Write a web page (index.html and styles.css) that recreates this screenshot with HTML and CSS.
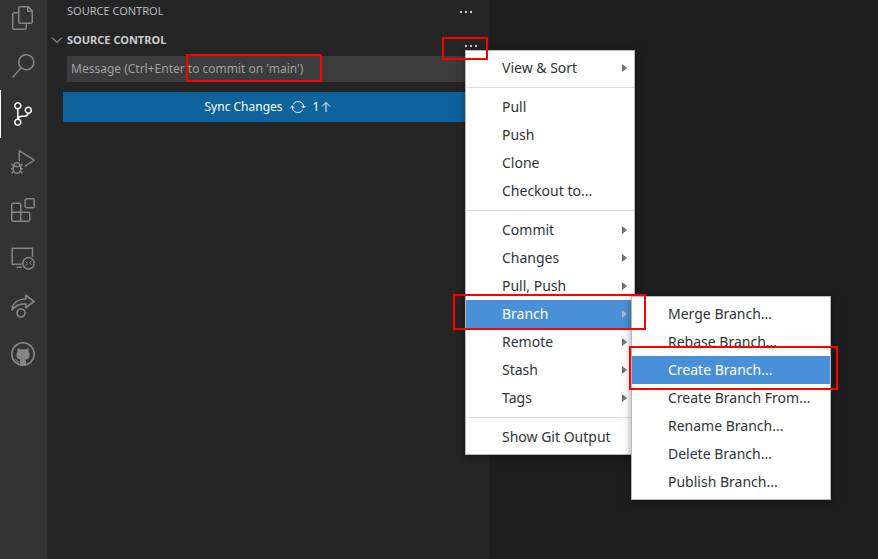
FILE: index.html
```html
<!DOCTYPE html>
<html lang="en">
<head>
<meta charset="utf-8">
<meta name="viewport" content="width=device-width, initial-scale=1">
<title>Source Control</title>
<link rel="stylesheet" href="styles.css">
</head>
<body>
<div class="workbench">
  <nav class="activity-bar" aria-label="Views">
    <button class="activity" aria-label="Explorer"><svg viewBox="0 0 24 24"><path d="M17.5 0h-9L7 1.5V6H2.5L1 7.5v15.07L2.5 24h12.07L16 22.57V18h4.7l1.3-1.43V4.5L17.5 0zm0 2.12l2.38 2.38H17.5V2.12zm-3 20.38h-12v-15H7v9.07L8.5 18h6v4.5zm6-6h-12v-15H16V6h4.5v10.5z"/></svg></button>
    <button class="activity" aria-label="Search"><svg viewBox="0 0 24 24"><path d="M15.25 0a8.25 8.25 0 0 0-6.18 13.72L1 22.88l1.12 1 8.05-9.12A8.251 8.251 0 1 0 15.25.01V0zm0 15a6.75 6.75 0 1 1 0-13.5 6.75 6.75 0 0 1 0 13.5z"/></svg></button>
    <button class="activity activity-current" aria-label="Source Control"><svg viewBox="0 0 24 24"><path d="M21.007 8.222A3.738 3.738 0 0 0 15.045 5.2a3.737 3.737 0 0 0 1.156 6.583 2.988 2.988 0 0 1-2.668 1.67h-2.99a4.456 4.456 0 0 0-2.989 1.165V7.4a3.737 3.737 0 1 0-1.494 0v9.117a3.776 3.776 0 1 0 1.816.099 2.99 2.99 0 0 1 2.668-1.667h2.99a4.484 4.484 0 0 0 4.223-3.039 3.736 3.736 0 0 0 3.25-3.687zM4.565 3.738a2.242 2.242 0 1 1 4.484 0 2.242 2.242 0 0 1-4.484 0zm4.484 16.441a2.242 2.242 0 1 1-4.484 0 2.242 2.242 0 0 1 4.484 0zm8.221-9.715a2.242 2.242 0 1 1 0-4.485 2.242 2.242 0 0 1 0 4.485z"/></svg></button>
    <button class="activity" aria-label="Run and Debug"><svg viewBox="0 0 24 24"><path d="M10.94 13.5l-1.32 1.32a3.73 3.73 0 0 0-7.24 0L1.06 13.5 0 14.56l1.72 1.72-.22.22V18H0v1.5h1.5v.08c.077.489.214.966.41 1.42L0 22.94 1.06 24l1.65-1.65A4.308 4.308 0 0 0 6 24a4.31 4.31 0 0 0 3.29-1.65L10.94 24 12 22.94 10.09 21c.198-.464.336-.951.41-1.45v-.1H12V18h-1.5v-1.5l-.22-.22L12 14.56l-1.06-1.06zM6 13.5a2.25 2.25 0 0 1 2.25 2.25h-4.5A2.25 2.25 0 0 1 6 13.5zm3 6a3.33 3.33 0 0 1-3 3 3.33 3.33 0 0 1-3-3v-2.25h6v2.25zm14.76-9.9v1.26L13.5 17.37V15.6l8.5-5.37L9 2v9.46a5.07 5.07 0 0 0-1.5-.72V.63L8.64 0l15.12 9.6z"/></svg></button>
    <button class="activity" aria-label="Extensions"><svg viewBox="0 0 24 24"><path d="M13.5 1.5L15 0h7.5L24 1.5V9l-1.5 1.5H15L13.5 9V1.5zm1.5 0V9h7.5V1.5H15zM0 15V6l1.5-1.5H9L10.5 6v7.5H18l1.5 1.5v7.5L18 24H1.5L0 22.5V15zm9-1.500V6H1.5v7.5H9zM9 15H1.5v7.5H9V15zm1.5 7.5H18V15h-7.5v7.5z"/></svg></button>
    <button class="activity" aria-label="Remote Explorer"><svg viewBox="0 0 24 24" class="line-icon"><g stroke-width="1.5"><path d="M10.5 18.300H1.200V2.200h20.300v8.500M5.500 21.300h5.500"/><circle cx="17.500" cy="17.300" r="5.700"/></g><path d="M14.300 15.500l2.200 2.200-2.200 2.200M20.700 14.500l-2.200 2.200 2.200 2.200"/></svg></button>
    <button class="activity" aria-label="Live Share"><svg viewBox="0 0 24 24" class="line-icon"><g stroke-width="1.700" stroke-linejoin="round"><path d="M14.800 5V1.200L23 7.500l-8.200 6.200V10C8.500 9.600 4.500 11.500 1 16 1.400 9.500 6.500 5.200 14.800 5z"/><circle cx="10" cy="19" r="4"/></g></svg></button>
    <button class="activity" aria-label="GitHub"><svg viewBox="0 0 24 24"><circle cx="12" cy="12" r="11.200" fill="none" stroke="currentColor" stroke-width="1.600"/><path d="M9 23.300v-3c-2.600.500-3.300-.500-3.800-1.500-.3-.6-.7-1-1.200-1.300.9-.5 1.700.1 2.200.9.700 1.100 1.500 1.200 2.800.8.100-.8.400-1.200.8-1.500-2.900-.3-4.400-1.700-4.400-5 0-1.300.4-2.300 1.100-3.200-.2-.8-.2-2 .2-3.200 1.100 0 2.200.7 3 1.300 1.500-.4 3.200-.4 4.700 0 .8-.6 1.900-1.300 3-1.300.4 1.200.4 2.400.2 3.200.7.900 1.100 1.900 1.100 3.200 0 3.300-1.600 4.700-4.500 5 .5.500.8 1.200.8 2.100v3.500c-1.700.5-4.300.5-6 0z"/></svg></button>
  </nav>

  <aside class="sidebar">
    <header class="view-title"><h1>SOURCE CONTROL</h1>
      <button class="more" aria-label="Views and more actions"><i></i><i></i><i></i></button></header>
    <div class="section-title">
      <svg class="chevron" viewBox="0 0 16 16"><path d="M3 5.500l5 5 5-5"/></svg>
      <h2>SOURCE CONTROL</h2>
      <button class="more" aria-label="More actions"><i></i><i></i><i></i></button>
    </div>
    <form class="commit-form">
      <input class="message" type="text" aria-label="Commit message" placeholder="Message (Ctrl+Enter to commit on 'main')">
      <button class="sync" type="button"><span>Sync Changes</span>
        <svg class="sync-icon" viewBox="0 0 16 16"><path d="M3.200 5.200A5.600 5.600 0 0 1 13.600 8.500M12.800 10.800A5.600 5.600 0 0 1 2.400 7.500M.2 9.200l2.200-2.200 2.200 2.200M15.800 6.800l-2.200 2.200-2.200-2.200"/></svg>
        <span class="ahead">1<svg class="arrow-up" viewBox="0 0 10 12"><path d="M5 11V1.500M1 5.500l4-4 4 4"/></svg></span>
      </button>
    </form>
  </aside>
  <main class="editor"></main>
</div>

<div class="menu main-menu" role="menu">
  <button class="item parent" role="menuitem">View &amp; Sort</button>
  <hr>
  <button class="item" role="menuitem">Pull</button>
  <button class="item" role="menuitem">Push</button>
  <button class="item" role="menuitem">Clone</button>
  <button class="item" role="menuitem">Checkout to...</button>
  <hr>
  <button class="item parent" role="menuitem">Commit</button>
  <button class="item parent" role="menuitem">Changes</button>
  <button class="item parent" role="menuitem">Pull, Push</button>
  <button class="item parent selected" role="menuitem">Branch</button>
  <button class="item parent" role="menuitem">Remote</button>
  <button class="item parent" role="menuitem">Stash</button>
  <button class="item parent" role="menuitem">Tags</button>
  <hr>
  <button class="item" role="menuitem">Show Git Output</button>
</div>

<div class="menu branch-menu" role="menu">
  <button class="item" role="menuitem">Merge Branch...</button>
  <button class="item" role="menuitem">Rebase Branch...</button>
  <button class="item selected" role="menuitem">Create Branch...</button>
  <button class="item" role="menuitem">Create Branch From...</button>
  <button class="item" role="menuitem">Rename Branch...</button>
  <button class="item" role="menuitem">Delete Branch...</button>
  <button class="item" role="menuitem">Publish Branch...</button>
</div>

<div class="mark mark-message"></div>
<div class="mark mark-more"></div>
<div class="mark mark-branch"></div>
<div class="mark mark-create"></div>
</body>
</html>
```
FILE: styles.css
```css
* { box-sizing: border-box; }

body {
  margin: 0;
  background: #1e1e1e;
  color: #ccc;
  font: 12px/18px "Noto Sans", "Open Sans", sans-serif;
  overflow: hidden;
}

button {
  border: 0;
  padding: 0;
  background: none;
  color: inherit;
  font: inherit;
}

h1, h2 { margin: 0; font-size: 11px; line-height: 22px; }
h1 { font-weight: 400; color: #bbb; }
h2 { font-weight: 700; }

.workbench { display: flex; min-height: 100vh; }

/* Activity bar, scrolled slightly past its first entry */
.activity-bar {
  display: flex;
  flex-direction: column;
  flex: 0 0 47px;
  margin-top: -6px;
  background: #333;
}
.activity {
  display: flex;
  align-items: center;
  height: 48px;
  padding-left: 10px;
  border-left: 1px solid transparent;
  color: #858585;
}
.activity-current { color: #fff; border-left-color: #fff; }
.activity svg { width: 24px; height: 24px; fill: currentColor; }
.activity .line-icon { fill: none; stroke: currentColor; }

/* Sidebar */
.sidebar { flex: 0 0 442px; background: #252526; }
.view-title {
  display: flex;
  align-items: center;
  justify-content: space-between;
  height: 22px;
  padding: 0 17px 0 20px;
}
.section-title {
  display: flex;
  align-items: center;
  height: 22px;
  margin-top: 7px;
  padding: 0 12px 0 2px;
}
.chevron { width: 16px; height: 16px; margin-right: 2px; fill: none; stroke: #ccc; }
.more { display: flex; gap: 3px; padding: 6px 0 4px; }
.more i { width: 2px; height: 2px; background: #ccc; }
.section-title .more { margin-left: auto; padding-top: 16px; }

.commit-form {
  display: flex;
  flex-direction: column;
  gap: 10px;
  padding: 5px 16px 0;
}
.message {
  height: 26px;
  margin-left: 4px;
  border: 0;
  padding: 0 4px 2px;
  background: #3c3c3c;
  color: #ccc;
  font: inherit;
}
.message::placeholder { color: #a0a0a0; opacity: 1; }
.sync {
  display: flex;
  align-items: center;
  justify-content: center;
  gap: 7px;
  height: 30px;
  background: #0e639c;
  color: #fff;
}
.sync svg { fill: none; stroke: #fff; }
.sync-icon { width: 16px; height: 16px; }
.ahead { display: flex; align-items: center; gap: 2px; }
.arrow-up { width: 10px; height: 12px; }

.editor { flex: 1; }

/* Context menus */
.menu {
  position: absolute;
  padding: 3px 0;
  border: 1px solid #b8b8b8;
  background: #fff;
  color: #2e3436;
  font-size: 14px;
  box-shadow: 0 2px 8px rgba(0, 0, 0, .4);
}
.main-menu { left: 465px; top: 50px; width: 170px; }
.branch-menu { left: 631px; top: 296px; width: 200px; }
.menu hr { height: 1px; margin: 5px 0; border: 0; background: #e0e0e0; }
.item {
  display: flex;
  align-items: center;
  width: 100%;
  height: 28px;
  padding: 0 7px 0 36px;
  white-space: nowrap;
}
.parent::after {
  content: "";
  margin-left: auto;
  border: 4px solid transparent;
  border-left: 5px solid #6c7173;
  border-right: 0;
}
.selected { background: #4a90d9; color: #fff; }
.selected::after { border-left-color: #b8b8b8; }

/* Highlight boxes */
.mark { position: absolute; border: 2px solid #f00; pointer-events: none; }
.mark-message { left: 186px; top: 54px; width: 136px; height: 28px; }
.mark-more { left: 442px; top: 37px; width: 46px; height: 23px; }
.mark-branch { left: 453px; top: 294px; width: 193px; height: 36px; }
.mark-create { left: 629px; top: 346px; width: 209px; height: 44px; }
```
